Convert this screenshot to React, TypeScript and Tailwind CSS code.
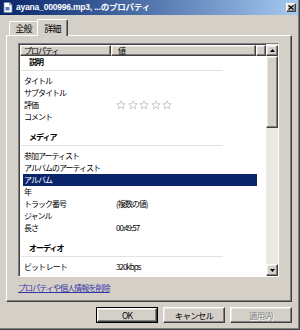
import React from "react";

const font = "font-['Noto_Sans_CJK_JP','Liberation_Sans',sans-serif]";

const raised =
  "border border-t-white border-l-white border-r-[#404040] border-b-[#404040] shadow-[inset_-1px_-1px_0_#808080,inset_1px_1px_0_#e8e6e1]";

function Row({ label, value, selected }: { label: string; value?: React.ReactNode; selected?: boolean }) {
  return (
    <div className="h-[12px] flex items-center pl-[3px]">
      <div
        className={
          "h-[12px] flex items-center w-[234px] " + (selected ? "bg-[#0a246a] text-white" : "text-black")
        }
      >
        <span className="w-[93px] pl-[1px] shrink-0 whitespace-nowrap">{label}</span>
        <span className="whitespace-nowrap">{value}</span>
      </div>
    </div>
  );
}

function Group({ title, first }: { title: string; first?: boolean }) {
  return (
    <div className={first ? "" : "mt-[8px]"}>
      <div className="h-[12px] flex items-center pl-[9px] font-bold text-black">{title}</div>
      <div className="mt-[2px] mb-[4px] ml-[1px] w-[202px] h-px bg-[#e2e2e2]" />
    </div>
  );
}

function Star() {
  return (
    <svg width="10" height="10" viewBox="0 0 10 10" className="mr-[1.5px]">
      <path
        d="M5 0.8 L6.2 3.6 L9.2 3.8 L6.9 5.8 L7.6 8.8 L5 7.2 L2.4 8.8 L3.1 5.8 L0.8 3.8 L3.8 3.6 Z"
        fill="none"
        stroke="#c4c4c4"
        strokeWidth="0.9"
        strokeLinejoin="round"
      />
    </svg>
  );
}

function Arrow({ up }: { up?: boolean }) {
  return (
    <svg width="5" height="3" viewBox="0 0 5 3">
      <path d={up ? "M2.5 0 L5 3 L0 3 Z" : "M0 0 L5 0 L2.5 3 Z"} fill="#000" />
    </svg>
  );
}

export default function App() {
  return (
    <div className={"w-[300px] h-[330px] bg-[#d4d0c8] border-r border-b border-[#404040] " + font}>
      <div className="h-full flex flex-col border-r border-b border-[#808080]">
        {/* title bar */}
        <div className="h-[15px] shrink-0 flex items-center bg-gradient-to-r from-[#0a246a] to-[#a6caf0] pl-[3px] pr-[2px]">
          <svg width="10" height="11" viewBox="0 0 10 11" className="shrink-0">
            <path d="M1 0.5 H6.5 L9 3 V10.5 H1 Z" fill="#ffffff" stroke="#6b7fa8" strokeWidth="0.8" />
            <path d="M6.5 0.5 V3 H9" fill="#dfe6f2" stroke="#6b7fa8" strokeWidth="0.8" />
            <rect x="2.5" y="5" width="4" height="3.5" fill="#4a7cc4" />
          </svg>
          <span className="ml-[3px] text-[8.5px] font-bold text-white whitespace-nowrap font-['Liberation_Sans','Noto_Sans_CJK_JP',sans-serif] tracking-[-0.2px]">
            ayana_000996.mp3, ...のプロパティ
          </span>
          <div className="flex-1" />
          <div className={"w-[10px] h-[9px] bg-[#d4d0c8] flex items-center justify-center " + raised}>
            <svg width="6" height="5" viewBox="0 0 6 5">
              <path d="M0.5 0.5 L5.5 4.5 M5.5 0.5 L0.5 4.5" stroke="#000" strokeWidth="1.2" />
            </svg>
          </div>
        </div>

        <div className="flex-1 flex flex-col px-[6px]">
          {/* tabs */}
          <div className="h-[20px] shrink-0 flex items-end pl-[3px] text-[9px] tracking-[-0.8px] text-black">
            <div className="h-[14px] w-[29px] flex items-center justify-center border-t border-l border-white border-r border-r-[#404040] rounded-t-[2px]">
              全般
            </div>
            <div className="h-[17px] w-[31px] -mb-px relative z-10 bg-[#d4d0c8] flex items-start pt-[2px] justify-center border-t border-l border-white border-r border-r-[#404040] rounded-t-[2px] -ml-[1px] shadow-[inset_-1px_0_0_#808080]">
              詳細
            </div>
          </div>

          {/* tab panel */}
          <div className="flex-1 flex flex-col border border-t-white border-l-white border-r-[#404040] border-b-[#404040] shadow-[inset_-1px_-1px_0_#808080] pt-[7px] pl-[11px] pr-[12px]">
            {/* list view */}
            <div className="h-[234px] shrink-0 flex border border-t-[#808080] border-l-[#808080] border-r-white border-b-white bg-white shadow-[inset_1px_1px_0_#404040]">
              <div className="flex-1 flex flex-col pl-[1px] pt-[1px] text-[8px] tracking-[-1px] leading-none overflow-hidden">
                {/* header */}
                <div className="h-[11px] shrink-0 flex text-black">
                  <div className={"w-[91px] h-full flex items-center pl-[3px] bg-[#d4d0c8] " + raised}>プロパティ</div>
                  <div className={"w-[145px] h-full flex items-center pl-[6px] bg-[#d4d0c8] " + raised}>値</div>
                  <div className={"flex-1 h-full bg-[#d4d0c8] " + raised} />
                </div>

                <Group title="説明" first />
                <Row label="タイトル" />
                <Row label="サブタイトル" />
                <Row
                  label="評価"
                  value={
                    <span className="flex">
                      <Star />
                      <Star />
                      <Star />
                      <Star />
                      <Star />
                    </span>
                  }
                />
                <Row label="コメント" />

                <Group title="メディア" />
                <Row label="参加アーティスト" />
                <Row label="アルバムのアーティスト" />
                <Row label="アルバム" selected />
                <Row label="年" />
                <Row label="トラック番号" value="(複数の値)" />
                <Row label="ジャンル" />
                <Row label="長さ" value="00:49:57" />

                <Group title="オーディオ" />
                <Row label="ビット レート" value="320kbps" />
              </div>

              {/* scrollbar */}
              <div className="w-[12px] shrink-0 flex flex-col pt-[1px] bg-[#ebe9e4]">
                <div className={"h-[11px] shrink-0 bg-[#d4d0c8] flex items-center justify-center " + raised}>
                  <Arrow up />
                </div>
                <div className={"h-[72px] shrink-0 bg-[#d4d0c8] " + raised} />
                <div className="flex-1" />
                <div className={"h-[12px] shrink-0 bg-[#d4d0c8] flex items-center justify-center " + raised}>
                  <Arrow />
                </div>
              </div>
            </div>

            <div className="mt-[6px] h-[10px] flex items-center text-[8px] tracking-[-0.9px] text-[#3535a5] underline">
              プロパティや個人情報を削除
            </div>
          </div>

          {/* buttons */}
          <div className="h-[26px] shrink-0 flex items-start justify-end gap-[5px] pt-[5px] text-[8.5px] tracking-[-0.8px]">
            <div className="w-[62px] h-[16px] border border-black">
              <div className={"w-full h-full bg-[#d4d0c8] flex items-center justify-center text-black " + raised}>OK</div>
            </div>
            <div className={"w-[62px] h-[16px] bg-[#d4d0c8] flex items-center justify-center text-black " + raised}>
              キャンセル
            </div>
            <div
              className={
                "w-[62px] h-[16px] bg-[#d4d0c8] flex items-center justify-center text-[#808080] [text-shadow:1px_1px_0_#ffffff] " +
                raised
              }
            >
              適用(A)
            </div>
          </div>
        </div>
      </div>
    </div>
  );
}
